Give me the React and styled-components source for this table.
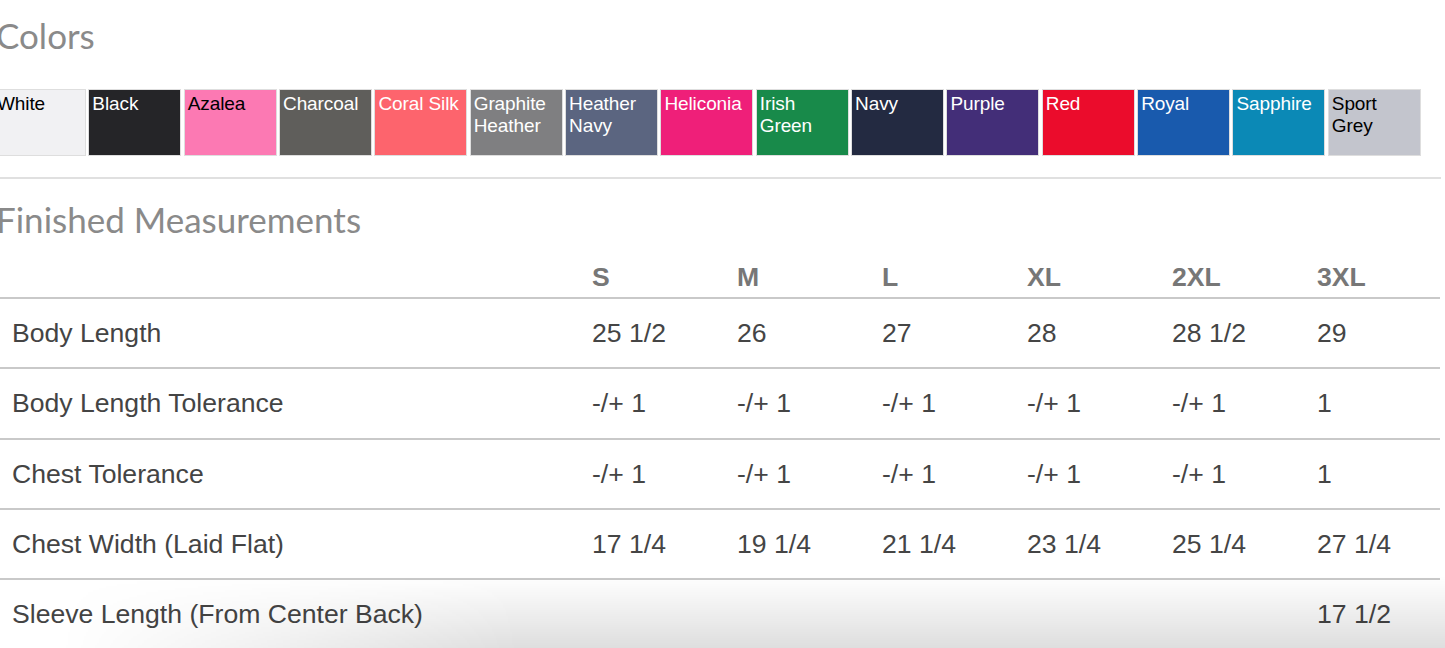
import React from 'react';
import styled, { createGlobalStyle } from 'styled-components';

const GlobalStyle = createGlobalStyle`
  html, body {
    margin: 0;
    padding: 0;
    background: #ffffff;
    overflow: hidden;
  }
  body {
    font-family: "Liberation Sans", Arial, sans-serif;
  }
`;

const colors = [
  { name: 'White', bg: '#f1f1f3', fg: '#000' },
  { name: 'Black', bg: '#252528', fg: '#fff' },
  { name: 'Azalea', bg: '#fc79b3', fg: '#000' },
  { name: 'Charcoal', bg: '#5f5e5b', fg: '#fff' },
  { name: 'Coral Silk', bg: '#fd646d', fg: '#fff' },
  { name: 'Graphite Heather', bg: '#7f7f81', fg: '#fff' },
  { name: 'Heather Navy', bg: '#5b6580', fg: '#fff' },
  { name: 'Heliconia', bg: '#ef1f79', fg: '#fff' },
  { name: 'Irish Green', bg: '#188a4a', fg: '#fff' },
  { name: 'Navy', bg: '#232a41', fg: '#fff' },
  { name: 'Purple', bg: '#432e78', fg: '#fff' },
  { name: 'Red', bg: '#eb0c2c', fg: '#fff' },
  { name: 'Royal', bg: '#195aad', fg: '#fff' },
  { name: 'Sapphire', bg: '#0b89b6', fg: '#fff' },
  { name: 'Sport Grey', bg: '#c3c5cd', fg: '#000' },
];

const sizes = ['S', 'M', 'L', 'XL', '2XL', '3XL'];

const rows = [
  { label: 'Body Length', values: ['25 1/2', '26', '27', '28', '28 1/2', '29'] },
  { label: 'Body Length Tolerance', values: ['-/+ 1', '-/+ 1', '-/+ 1', '-/+ 1', '-/+ 1', '1'] },
  { label: 'Chest Tolerance', values: ['-/+ 1', '-/+ 1', '-/+ 1', '-/+ 1', '-/+ 1', '1'] },
  { label: 'Chest Width (Laid Flat)', values: ['17 1/4', '19 1/4', '21 1/4', '23 1/4', '25 1/4', '27 1/4'] },
  { label: 'Sleeve Length (From Center Back)', values: ['', '', '', '', '', '17 1/2'] },
];

function App() {
  return (
    <Page>
      <GlobalStyle />
      <Heading>Colors</Heading>
      <SwatchRow>
        {colors.map((c) => (
          <Swatch key={c.name} $bg={c.bg} $fg={c.fg}>
            {c.name}
          </Swatch>
        ))}
      </SwatchRow>
      <Divider />

      <Heading $top={20}>Finished Measurements</Heading>
      <Table>
        <HeadRow>
          <Cell />
          {sizes.map((s) => (
            <SizeCell key={s}>{s}</SizeCell>
          ))}
        </HeadRow>
        {rows.map((r) => (
          <Row key={r.label}>
            <LabelCell>{r.label}</LabelCell>
            {r.values.map((v, i) => (
              <Cell key={i}>{v}</Cell>
            ))}
          </Row>
        ))}
      </Table>
      <Shade />
    </Page>
  );
}

const Page = styled.div`
  position: relative;
  width: 1445px;
  height: 648px;
  overflow: hidden;
  background: #fff;
`;

const Heading = styled.h2`
  margin: ${(p) => p.$top ?? 15}px 0 0 -4px;
  font-family: Lato, "Open Sans", sans-serif;
  font-weight: 400;
  font-size: 35px;
  line-height: 40px;
  color: #8a8a8a;
  letter-spacing: 0;
`;

const SwatchRow = styled.div`
  display: flex;
  gap: 2.35px;
  margin: 34px 0 0 -7px;
`;

const Swatch = styled.div`
  box-sizing: border-box;
  flex: 0 0 93px;
  height: 67px;
  padding: 3px 3px 0 3px;
  border: 1px solid #dedede;
  background: ${(p) => p.$bg};
  color: ${(p) => p.$fg};
  font-family: "Liberation Sans", Arial, sans-serif;
  font-size: 19px;
  line-height: 22px;
  letter-spacing: -0.1px;
  overflow: hidden;
`;

const Divider = styled.div`
  width: 1441px;
  height: 2px;
  margin-top: 21px;
  background: #e0e0e0;
`;

const Table = styled.div`
  width: 1440px;
`;

const HeadRow = styled.div`
  display: grid;
  grid-template-columns: 580px repeat(5, 145px) 1fr;
  padding: 23px 0 5px;
  border-bottom: 2px solid #c9c9c9;
`;

const Row = styled.div`
  display: grid;
  grid-template-columns: 580px repeat(5, 145px) 1fr;
  box-sizing: border-box;
  height: 70.3px;
  padding-top: 19px;
  border-bottom: 2px solid #c9c9c9;
  &:last-child {
    border-bottom: none;
  }
`;

const Cell = styled.div`
  padding-left: 12px;
  font-family: "Liberation Sans", Arial, sans-serif;
  font-size: 26.6px;
  line-height: 30px;
  color: #454545;
  white-space: nowrap;
`;

const LabelCell = styled(Cell)`
  color: #444;
`;

const SizeCell = styled(Cell)`
  font-weight: 700;
  color: #777;
`;

const Shade = styled.div`
  position: absolute;
  left: 0;
  right: 0;
  bottom: 0;
  height: 72px;
  pointer-events: none;
  background: linear-gradient(to bottom, rgba(0, 0, 0, 0), rgba(0, 0, 0, 0.13));
  -webkit-mask-image: linear-gradient(to right, transparent 60px, #000 520px);
  mask-image: linear-gradient(to right, transparent 60px, #000 520px);
`;

export default App;
